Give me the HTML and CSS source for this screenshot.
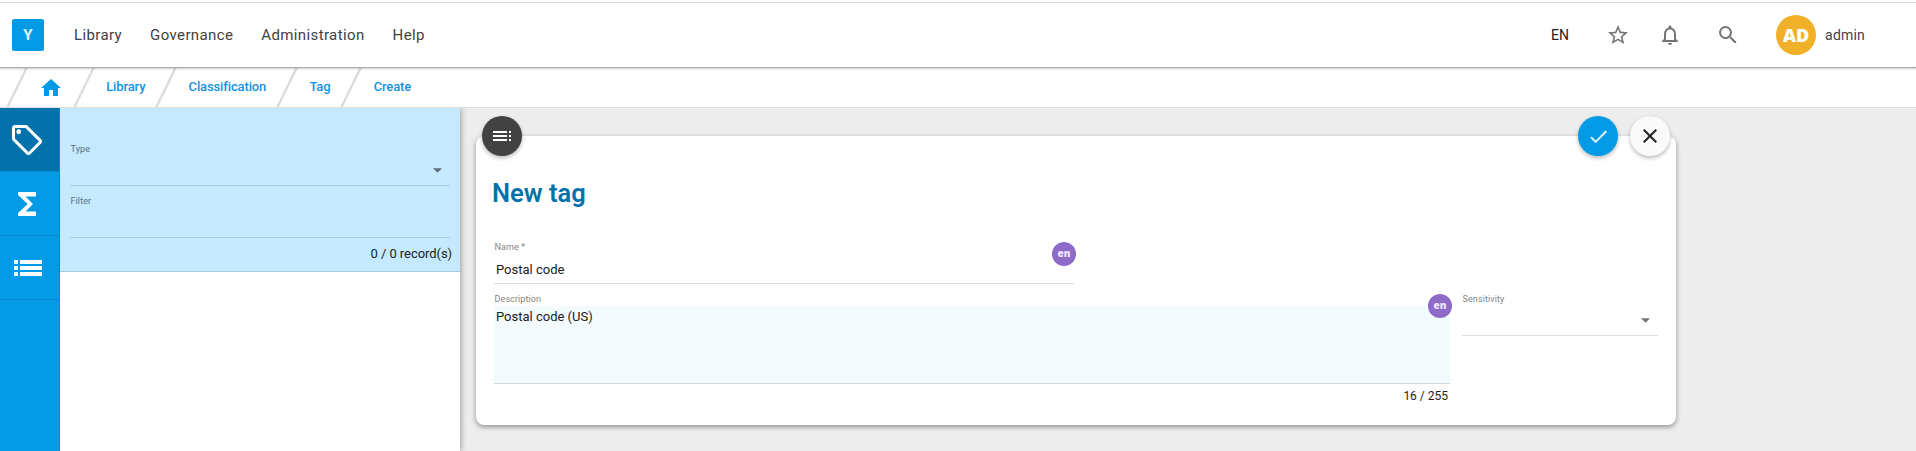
FILE: index.html
```html
<!DOCTYPE html>
<html lang="en">
<head>
<meta charset="utf-8">
<title>New tag</title>
<link rel="stylesheet" href="styles.css">
</head>
<body>
<header class="topbar">
  <div class="logo">Y</div>
  <nav class="menu"><a>Library</a><a>Governance</a><a>Administration</a><a>Help</a></nav>
  <div class="tools">
    <span class="lang">EN</span>
    <svg class="tool star" viewBox="0 0 24 24"><path d="M22 9.24l-7.19-.62L12 2 9.19 8.63 2 9.24l5.46 4.73L5.82 21 12 17.27 18.18 21l-1.63-7.03L22 9.24zM12 15.4l-3.76 2.27 1-4.28-3.32-2.88 4.38-.38L12 6.1l1.71 4.04 4.38.38-3.32 2.88 1 4.28L12 15.4z"/></svg>
    <svg class="tool bell" viewBox="0 0 24 24"><path d="M12 22c1.1 0 2-.9 2-2h-4c0 1.1.9 2 2 2zm6-6v-5c0-3.07-1.63-5.64-4.5-6.32V4c0-.83-.67-1.5-1.5-1.5s-1.5.67-1.5 1.5v.68C7.64 5.36 6 7.92 6 11v5l-2 2v1h16v-1l-2-2zm-2 1H8v-6c0-2.48 1.51-4.5 4-4.5s4 2.02 4 4.5v6z"/></svg>
    <svg class="tool search" viewBox="0 0 24 24"><path d="M15.5 14h-.79l-.28-.27A6.47 6.47 0 0 0 16 9.5 6.5 6.5 0 1 0 9.5 16c1.61 0 3.09-.59 4.23-1.57l.27.28v.79l5 4.99L20.49 19l-4.99-5zm-6 0C7.01 14 5 11.99 5 9.5S7.01 5 9.5 5 14 7.01 14 9.5 11.99 14 9.5 14z"/></svg>
    <span class="avatar">AD</span>
    <span class="user">admin</span>
  </div>
</header>
<nav class="crumbs">
  <svg class="slash" viewBox="0 0 22 39"><path d="M20.5 0L1.5 39"/></svg>
  <svg class="home" viewBox="0 0 24 24"><path d="M10 20v-6h4v6h5v-8h3L12 3 2 12h3v8z"/></svg>
  <svg class="slash" viewBox="0 0 22 39"><path d="M20.5 0L1.5 39"/></svg>
  <a>Library</a>
  <svg class="slash" viewBox="0 0 22 39"><path d="M20.5 0L1.5 39"/></svg>
  <a>Classification</a>
  <svg class="slash" viewBox="0 0 22 39"><path d="M20.5 0L1.5 39"/></svg>
  <a>Tag</a>
  <svg class="slash" viewBox="0 0 22 39"><path d="M20.5 0L1.5 39"/></svg>
  <a>Create</a>
</nav>
<div class="workspace">
  <aside class="rail">
    <div class="rail-item active"><svg viewBox="0 0 24 24"><path d="M21.41 11.58l-9-9C12.05 2.22 11.55 2 11 2H4c-1.1 0-2 .9-2 2v7c0 .55.22 1.05.59 1.42l9 9c.36.36.86.58 1.41.58s1.05-.22 1.41-.59l7-7c.37-.36.59-.86.59-1.41s-.23-1.06-.59-1.42zM13 20.01L4 11V4h7v-.01l9 9-7 7.02z"/><circle cx="6.5" cy="6.5" r="1.6"/></svg></div>
    <div class="rail-item"><svg viewBox="0 0 24 24"><path d="M18 4H6v2l6.5 6L6 18v2h12v-3h-7l5-5-5-5h7z"/></svg></div>
    <div class="rail-item list"><svg viewBox="0 0 36 36"><path d="M4 10h4v4H4zM10 10h22v4H10zM4 16h4v4H4zM10 16h22v4H10zM4 22h4v4H4zM10 22h22v4H10z"/></svg></div>
  </aside>
  <section class="browser">
    <div class="filters">
      <div class="field type"><label>Type</label><svg class="caret" viewBox="0 0 10 5"><path d="M0 0h10L5 5z"/></svg></div>
      <div class="field filter"><label>Filter</label></div>
      <div class="count">0 / 0 record(s)</div>
    </div>
  </section>
  <main class="content">
    <div class="card">
      <div class="fab dark"><svg viewBox="0 0 24 24"><path d="M3 9h14V7H3v2zm0 4h14v-2H3v2zm0 4h14v-2H3v2zm16 0h2v-2h-2v2zm0-10v2h2V7h-2zm0 6h2v-2h-2v2z"/></svg></div>
      <div class="fab ok"><svg viewBox="0 0 24 24"><path d="M9 16.17L4.83 12l-1.42 1.41L9 19 21 7l-1.41-1.41z"/></svg></div>
      <div class="fab close"><svg viewBox="0 0 24 24"><path d="M19 6.41L17.59 5 12 10.59 6.41 5 5 6.41 10.59 12 5 17.59 6.41 19 12 13.41 17.59 19 19 17.59 13.41 12z"/></svg></div>
      <h1>New tag</h1>
      <div class="field name"><label>Name *</label><div class="value">Postal code</div><span class="badge">en</span></div>
      <div class="row">
        <div class="desc">
          <label>Description</label>
          <div class="textarea">Postal code (US)</div>
          <div class="counter">16 / 255</div>
          <span class="badge">en</span>
        </div>
        <div class="field sens"><label>Sensitivity</label><svg class="caret" viewBox="0 0 10 5"><path d="M0 0h10L5 5z"/></svg></div>
      </div>
    </div>
  </main>
</div>
</body>
</html>
```
FILE: styles.css
```css
* { box-sizing: border-box; }
body {
  margin: 0;
  height: 451px;
  overflow: hidden;
  display: flex;
  flex-direction: column;
  padding-top: 2px;
  background: #fff;
  font-family: Roboto, "Liberation Sans", sans-serif;
  font-size: 13px;
  color: #212121;
}
svg { display: block; flex: none; fill: currentColor; }
.topbar {
  flex: none;
  height: 66px;
  display: flex;
  align-items: center;
  padding: 0 51px 0 12px;
  border-top: 1px solid #ddd;
  border-bottom: 1px solid #a9acac;
  box-shadow: 0 1px 2px rgba(0, 0, 0, .2);
  position: relative;
}
.logo {
  width: 32px;
  height: 32px;
  border-radius: 2px;
  background: #039be5;
  color: #e1f5fe;
  font-size: 15px;
  font-weight: 700;
  line-height: 32px;
  text-align: center;
}
.menu { display: flex; gap: 28px; margin-left: 30px; font-size: 15px; letter-spacing: .38px; color: #424242; }
.tools { margin-left: auto; display: flex; align-items: center; color: #757575; }
.lang { color: #212121; font-size: 14px; }
.tool { width: 24px; height: 24px; }
.star { margin-left: 37px; }
.bell { margin-left: 28px; }
.search { margin-left: 34px; }
.avatar {
  width: 40px;
  height: 40px;
  margin-left: 36px;
  border-radius: 50%;
  background: #f0b128;
  color: #fff;
  font: 800 18px/41px "Open Sans", sans-serif;
  text-align: center;
}
.user { margin-left: 9px; font-size: 14px; letter-spacing: .2px; color: #424242; }
.crumbs {
  flex: none;
  height: 40px;
  display: flex;
  align-items: center;
  padding-left: 6px;
  border-bottom: 1px solid #ddd;
  color: #1591e2;
  font-weight: 500;
  letter-spacing: -.13px;
}
.crumbs a { margin: 0 10px 2px 11.2px; line-height: 16px; }
.slash { width: 22px; height: 39px; fill: none; stroke: #ddd; stroke-width: 2.5; }
.home { width: 24px; height: 24px; margin: 0 10px 0 11px; color: #039be5; }
.workspace { flex: 1; min-height: 0; display: flex; background: #ededed; }
.rail { flex: none; width: 60px; background: #039be5; border-right: 1px solid #0289cb; color: #fff; }
.rail-item { height: 64px; padding: 14px 9px 0; border-bottom: 1px solid #0289cb; }
.rail-item svg { width: 36px; height: 36px; }
.active { background: #0372aa; }
.list svg { margin-left: 1px; }
.browser { flex: none; width: 400px; background: #fff; box-shadow: 1px 0 6px rgba(0, 0, 0, .35); clip-path: inset(0 -12px 0 0); }
.filters { height: 164px; padding: 26px 10px 0; background: #c5eaff; border-bottom: 1px solid #a9cbdc; }
.field { position: relative; height: 52px; border-bottom: 1px solid #ddd; }
label { display: block; font-size: 9px; line-height: 12px; letter-spacing: .1px; color: #858585; }
.filters .field { padding: 9px 0 0 .5px; border-color: #a9cbdc; }
.filters label { color: #56707d; }
.caret { position: absolute; width: 9px; height: 5px; right: 8px; bottom: 12px; color: #616e75; }
.count { margin: 7px -2px 0 0; text-align: right; line-height: 18px; letter-spacing: -.06px; }
.content { flex: 1; padding: 28px 0 0 16px; }
.card {
  position: relative;
  width: 1200px;
  height: 289px;
  padding: 44px 18px 0;
  border-radius: 8px;
  background: #fff;
  box-shadow: 0 2px 5px rgba(0, 0, 0, .4);
}
.fab {
  position: absolute;
  top: -20px;
  width: 40px;
  height: 40px;
  display: grid;
  place-items: center;
  border-radius: 50%;
  box-shadow: 0 2px 4px rgba(0, 0, 0, .28);
}
.fab svg { width: 24px; height: 24px; }
.fab.ok svg { width: 23px; height: 23px; }
.dark { left: 6px; background: #424242; color: #fff; }
.ok { right: 58px; background: #039be5; color: #e1f5fe; }
.close { right: 6px; background: #fafafa; color: #212121; }
h1 { margin: 0 0 0 -2px; font-size: 25.5px; font-weight: 600; line-height: 26px; color: #0372aa; }
.name { width: 580px; height: 52px; margin-top: 26px; padding: 9px 0 0 .5px; }
.value { margin: 9px 0 0 1.5px; line-height: 16px; }
.badge {
  position: absolute;
  width: 24px;
  height: 24px;
  right: -2px;
  border-radius: 50%;
  background: #8e6bc8;
  color: #efe6ff;
  font: 800 10px/23px "Open Sans", sans-serif;
  text-align: center;
}
.name .badge { top: 10px; }
.row { display: flex; gap: 12px; }
.desc { position: relative; width: 956px; padding-top: 9px; }
.desc label { padding-left: .5px; }
.textarea { height: 78px; margin-top: 1px; padding: 3px 2px; line-height: 16px; background: #f3fbff; border-bottom: 1px solid #cfd8dc; }
.counter { padding: 3px 2px 0 0; text-align: right; font-size: 12px; line-height: 18px; }
.desc .badge { top: 10px; }
.sens { width: 196px; padding: 9px 0 0 .5px; }
.sens .caret { color: #757575; }
```
